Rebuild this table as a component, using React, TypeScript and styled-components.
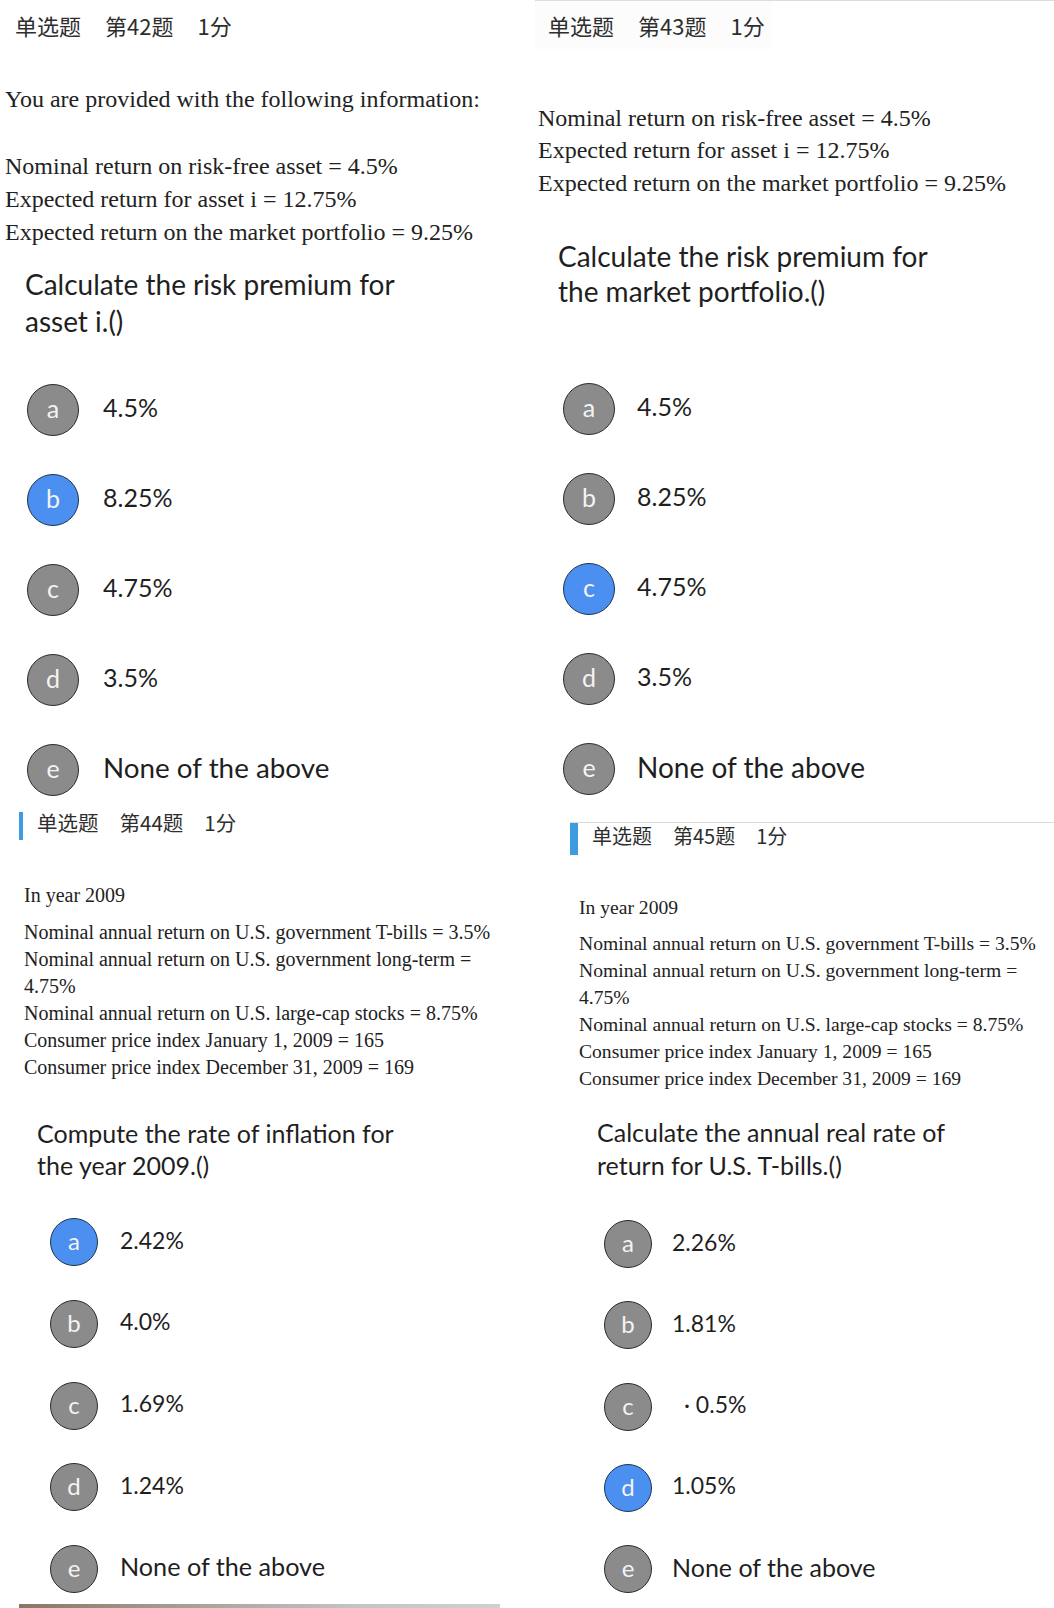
import React from 'react';
import styled, { createGlobalStyle } from 'styled-components';

const GlobalStyle = createGlobalStyle`
  html, body { margin: 0; padding: 0; background: #ffffff; }
  body { width: 1054px; height: 1608px; overflow: hidden; }
  * { box-sizing: border-box; }
`;

const Page = styled.div`
  display: flex;
  width: 1054px;
  height: 1608px;
  background: #ffffff;
  overflow: hidden;
`;

const Column = styled.div<{ $w: number }>`
  display: flex;
  flex-direction: column;
  width: ${p => p.$w}px;
  flex: none;
`;

const Panel = styled.section<{ $h?: number; $ml?: number; $rule?: boolean }>`
  display: flex;
  flex-direction: column;
  ${p => (p.$h ? `height: ${p.$h}px; flex: none;` : 'flex: 1;')}
  margin-left: ${p => p.$ml ?? 0}px;
  border-top: ${p => (p.$rule ? '1px solid #dcdcdc' : 'none')};
`;

const Header = styled.div<{ $h: number; $pl: number; $mt?: number; $bg?: string; $w?: number }>`
  display: flex;
  align-items: center;
  height: ${p => p.$h}px;
  margin-top: ${p => p.$mt ?? 0}px;
  padding-left: ${p => p.$pl}px;
  background: ${p => p.$bg ?? 'transparent'};
  width: ${p => (p.$w ? `${p.$w}px` : 'auto')};
  align-self: flex-start;
`;

const AccentBar = styled.span<{ $w: number; $h: number; $gap: number }>`
  display: block;
  width: ${p => p.$w}px;
  height: ${p => p.$h}px;
  background: #3d9be0;
  margin-right: ${p => p.$gap}px;
  flex: none;
`;

const HeaderTexts = styled.div<{ $size: number; $gap: number; $shift?: number }>`
  display: flex;
  gap: ${p => p.$gap}px;
  font-family: "Noto Sans CJK SC", "Noto Sans", sans-serif;
  font-size: ${p => p.$size}px;
  line-height: 1;
  color: #2e2e2e;
  transform: translateY(${p => p.$shift ?? 0}px);
`;

const SerifBlock = styled.div<{ $size: number; $lh: number; $pl: number; $mt: number }>`
  font-family: "Liberation Serif", "Times New Roman", serif;
  font-size: ${p => p.$size}px;
  line-height: ${p => p.$lh}px;
  padding-left: ${p => p.$pl}px;
  margin-top: ${p => p.$mt}px;
  color: #222222;
  white-space: nowrap;
`;

const Prompt = styled.div<{ $size: number; $lh: number; $pl: number; $mt: number }>`
  font-family: Lato, "Open Sans", sans-serif;
  font-size: ${p => p.$size}px;
  line-height: ${p => p.$lh}px;
  padding-left: ${p => p.$pl}px;
  margin-top: ${p => p.$mt}px;
  color: #1f1f1f;
  white-space: nowrap;
`;

const OptionList = styled.div<{ $gap: number; $pl: number; $mt: number }>`
  display: flex;
  flex-direction: column;
  gap: ${p => p.$gap}px;
  padding-left: ${p => p.$pl}px;
  margin-top: ${p => p.$mt}px;
`;

const OptionRow = styled.div<{ $gap: number }>`
  display: flex;
  align-items: center;
  gap: ${p => p.$gap}px;
`;

const Bubble = styled.span<{ $d: number; $on: boolean; $size: number }>`
  display: flex;
  align-items: center;
  justify-content: center;
  width: ${p => p.$d}px;
  height: ${p => p.$d}px;
  flex: none;
  border-radius: 50%;
  background: ${p => (p.$on ? '#4b8ff0' : '#8b8b8b')};
  border: 1.5px solid ${p => (p.$on ? '#1d3550' : '#2b2b2b')};
  color: #f3f3f3;
  font-family: Lato, "Open Sans", sans-serif;
  font-size: ${p => p.$size}px;
  line-height: 1;
  padding-bottom: 2px;
`;

const OptionText = styled.span<{ $size: number; $indent?: number }>`
  font-family: Lato, "Open Sans", sans-serif;
  font-size: ${p => p.$size}px;
  line-height: 1;
  color: #1f1f1f;
  padding-left: ${p => p.$indent ?? 0}px;
  white-space: nowrap;
  transform: translateY(-2px);
`;

const FooterBar = styled.div<{ $ml: number; $w: number; $mt: number }>`
  height: 4px;
  width: ${p => p.$w}px;
  margin-left: ${p => p.$ml}px;
  margin-top: ${p => p.$mt}px;
  background: linear-gradient(to right, #8a7662, #a7a099 35%, #c4c4c4 70%, #d0d0d0);
`;

type Opt = { text: string; indent?: number };

type OptionsSpec = {
  mt: number;
  pl: number;
  d: number;
  gap: number;
  textGap: number;
  textSize: number;
  noneSize: number;
  letterSize: number;
};

const LETTERS = ['a', 'b', 'c', 'd', 'e'];

function Options({ spec, items, selected }: { spec: OptionsSpec; items: Opt[]; selected: number }) {
  return (
    <OptionList $gap={spec.gap} $pl={spec.pl} $mt={spec.mt}>
      {items.map((o, i) => (
        <OptionRow key={i} $gap={spec.textGap}>
          <Bubble $d={spec.d} $on={i === selected} $size={spec.letterSize}>
            {LETTERS[i]}
          </Bubble>
          <OptionText $size={i === 4 ? spec.noneSize : spec.textSize} $indent={o.indent}>
            {o.text}
          </OptionText>
        </OptionRow>
      ))}
    </OptionList>
  );
}

function HeaderLabels({ num, size, gap, shift }: { num: number; size: number; gap: number; shift?: number }) {
  return (
    <HeaderTexts $size={size} $gap={gap} $shift={shift}>
      <span>单选题</span>
      <span>第{num}题</span>
      <span>1分</span>
    </HeaderTexts>
  );
}

const riskLines = [
  'Nominal return on risk-free asset = 4.5%',
  'Expected return for asset i = 12.75%',
  'Expected return on the market portfolio = 9.25%',
];

const yearLines = (
  <>
    Nominal annual return on U.S. government T-bills = 3.5%
    <br />
    Nominal annual return on U.S. government long-term =
    <br />
    4.75%
    <br />
    Nominal annual return on U.S. large-cap stocks = 8.75%
    <br />
    Consumer price index January 1, 2009 = 165
    <br />
    Consumer price index December 31, 2009 = 169
  </>
);

const pctOptions: Opt[] = [
  { text: '4.5%' },
  { text: '8.25%' },
  { text: '4.75%' },
  { text: '3.5%' },
  { text: 'None of the above' },
];

export default function App() {
  return (
    <>
      <GlobalStyle />
      <Page>
        <Column $w={520}>
          {/* Question 42 */}
          <Panel $h={800}>
            <Header $h={50} $pl={15}>
              <HeaderLabels num={42} size={22} gap={24} />
            </Header>
            <SerifBlock $size={24} $lh={33} $pl={5} $mt={33}>
              You are provided with the following information:
            </SerifBlock>
            <SerifBlock $size={24} $lh={33} $pl={5} $mt={34}>
              {riskLines.map(l => (
                <div key={l}>{l}</div>
              ))}
            </SerifBlock>
            <Prompt $size={28} $lh={37} $pl={25} $mt={17}>
              Calculate the risk premium for
              <br />
              asset i.()
            </Prompt>
            <Options
              spec={{ mt: 43.5, pl: 27, d: 52, gap: 38, textGap: 24, textSize: 25, noneSize: 27.8, letterSize: 25 }}
              items={pctOptions}
              selected={1}
            />
          </Panel>

          {/* Question 44 */}
          <Panel>
            <Header $h={28} $pl={19} $mt={12}>
              <AccentBar $w={4} $h={28} $gap={14} />
              <HeaderLabels num={44} size={20.5} gap={21} shift={-4} />
            </Header>
            <SerifBlock $size={20} $lh={27} $pl={24} $mt={41.5}>
              In year 2009
            </SerifBlock>
            <SerifBlock $size={20} $lh={27} $pl={24} $mt={10}>
              {yearLines}
            </SerifBlock>
            <Prompt $size={25} $lh={32} $pl={37} $mt={36.5}>
              Compute the rate of inflation for
              <br />
              the year 2009.()
            </Prompt>
            <Options
              spec={{ mt: 37, pl: 50, d: 48, gap: 33.75, textGap: 22, textSize: 23, noneSize: 25.2, letterSize: 24 }}
              items={[
                { text: '2.42%' },
                { text: '4.0%' },
                { text: '1.69%' },
                { text: '1.24%' },
                { text: 'None of the above' },
              ]}
              selected={0}
            />
            <FooterBar $ml={19} $w={481} $mt={11} />
          </Panel>
        </Column>

        <Column $w={534}>
          {/* Question 43 */}
          <Panel $h={822} $ml={15} $rule>
            <Header $h={48} $pl={13} $bg="#fcfcfc" $w={237}>
              <HeaderLabels num={43} size={22} gap={24} />
            </Header>
            <SerifBlock $size={24} $lh={32.5} $pl={3} $mt={52.75}>
              {riskLines.map(l => (
                <div key={l}>{l}</div>
              ))}
            </SerifBlock>
            <Prompt $size={28} $lh={35} $pl={23} $mt={40}>
              Calculate the risk premium for
              <br />
              the market portfolio.()
            </Prompt>
            <Options
              spec={{ mt: 73.5, pl: 28, d: 52, gap: 38, textGap: 22, textSize: 25, noneSize: 28, letterSize: 25 }}
              items={pctOptions}
              selected={2}
            />
          </Panel>

          {/* Question 45 */}
          <Panel $ml={50} $rule>
            <Header $h={32} $pl={0}>
              <AccentBar $w={8} $h={32} $gap={14} />
              <HeaderLabels num={45} size={20} gap={21} shift={-3.5} />
            </Header>
            <SerifBlock $size={19.6} $lh={27} $pl={9} $mt={38.5}>
              In year 2009
            </SerifBlock>
            <SerifBlock $size={19.6} $lh={27} $pl={9} $mt={9}>
              {yearLines}
            </SerifBlock>
            <Prompt $size={25} $lh={33} $pl={27} $mt={24}>
              Calculate the annual real rate of
              <br />
              return for U.S. T-bills.()
            </Prompt>
            <Options
              spec={{ mt: 38.5, pl: 34, d: 48, gap: 33.25, textGap: 20, textSize: 23, noneSize: 25, letterSize: 24 }}
              items={[
                { text: '2.26%' },
                { text: '1.81%' },
                { text: '· 0.5%', indent: 12 },
                { text: '1.05%' },
                { text: 'None of the above' },
              ]}
              selected={3}
            />
          </Panel>
        </Column>
      </Page>
    </>
  );
}
